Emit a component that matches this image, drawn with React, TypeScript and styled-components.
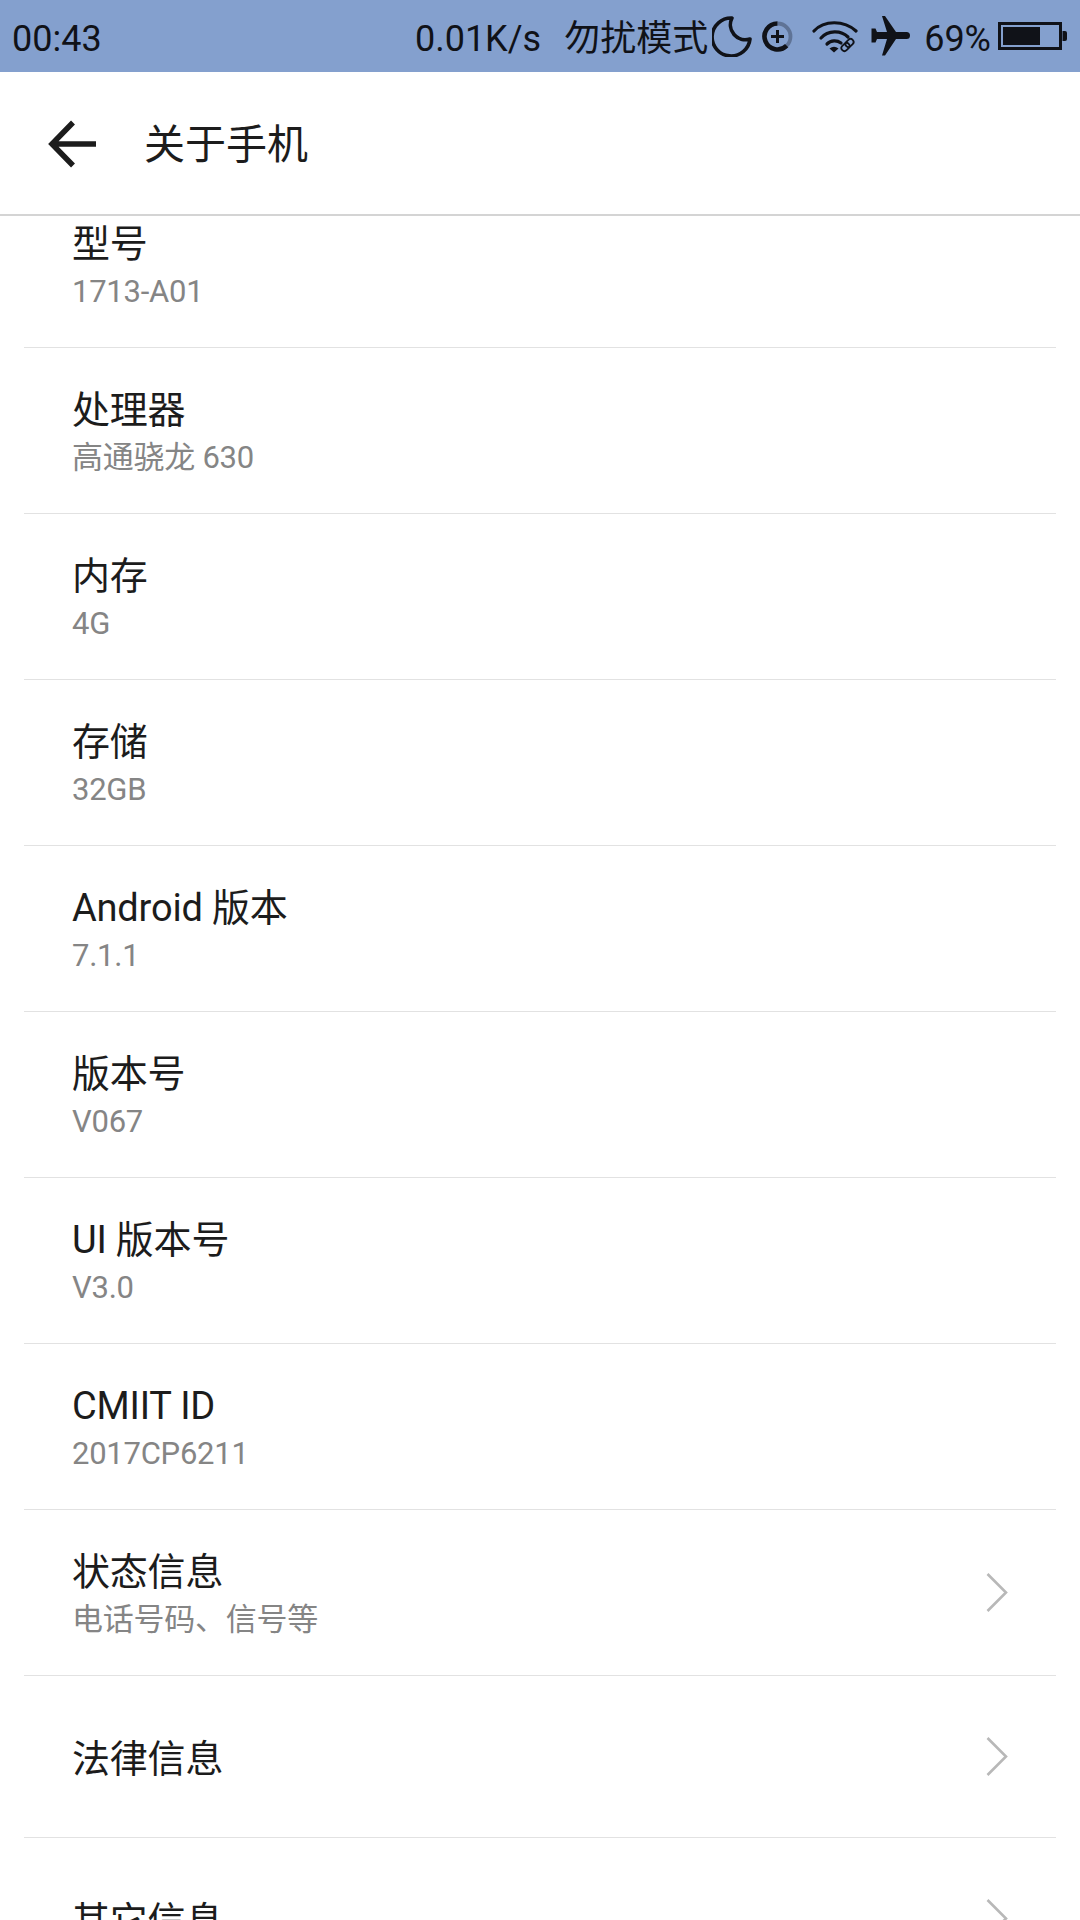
import React from "react";
import styled, { createGlobalStyle } from "styled-components";

const GlobalStyle = createGlobalStyle`
    html, body {
        margin: 0;
        padding: 0;
        background: #fff;
    }
    body {
        font-family: Roboto, "Noto Sans CJK SC", sans-serif;
    }
`;

const Page = styled.div`
    width: 1080px;
    height: 1920px;
    display: flex;
    flex-direction: column;
    overflow: hidden;
    background: #fff;
`;

const StatusBar = styled.div`
    height: 72px;
    flex: none;
    display: flex;
    align-items: center;
    justify-content: space-between;
    padding: 0 13px 0 12px;
    background: #84a0ce;
    color: #101218;
`;

const StatusText = styled.span`
    font-size: 36px;
    line-height: 65px;
    padding-top: 7px;
    white-space: nowrap;
`;

const StatusRight = styled.div`
    display: flex;
    align-items: center;
`;

const StatusIcon = styled.svg<{ $left: number }>`
    display: block;
    flex: none;
    margin-left: ${(p) => p.$left}px;
`;

const DndText = styled(StatusText)`
    margin-left: 23px;
`;

const BatteryText = styled(StatusText)`
    margin-left: 14px;
`;

const AppBar = styled.div`
    height: 142px;
    flex: none;
    display: flex;
    align-items: center;
    border-bottom: 2px solid #d4d4d4;
    color: #1c1c1c;
`;

const BackButton = styled.svg`
    display: block;
    margin-left: 48px;
    margin-right: 48px;
    padding-top: 2px;
`;

const Title = styled.div`
    font-size: 41px;
    line-height: 48px;
    padding-top: 4px;
`;

const List = styled.div`
    flex: 1;
    overflow: hidden;
`;

const Rows = styled.div`
    margin-top: -34px;
`;

const Row = styled.div<{ $height?: number }>`
    height: ${(p) => p.$height || 165}px;
    margin: 0 24px;
    padding: 0 48px 0 48px;
    display: flex;
    align-items: center;
    justify-content: space-between;
    border-bottom: 1px solid #e2e2e2;
`;

const RowText = styled.div`
    display: flex;
    flex-direction: column;
    padding-top: 5px;
`;

const RowTitle = styled.div`
    font-size: 38px;
    line-height: 48px;
    letter-spacing: -0.2px;
    color: #1c1c1c;
`;

const RowSub = styled.div`
    margin-top: 2px;
    font-size: 31px;
    line-height: 44px;
    letter-spacing: -0.25px;
    color: #858585;
`;

const Chevron = styled.svg`
    display: block;
    flex: none;
`;

interface InfoRow {
    title: string;
    sub?: string;
    link?: boolean;
    height?: number;
}

const rows: InfoRow[] = [
    { title: "型号", sub: "1713-A01" },
    { title: "处理器", sub: "高通骁龙 630" },
    { title: "内存", sub: "4G" },
    { title: "存储", sub: "32GB" },
    { title: "Android 版本", sub: "7.1.1" },
    { title: "版本号", sub: "V067" },
    { title: "UI 版本号", sub: "V3.0" },
    { title: "CMIIT ID", sub: "2017CP6211" },
    { title: "状态信息", sub: "电话号码、信号等", link: true },
    { title: "法律信息", link: true, height: 161 },
    { title: "其它信息", link: true, height: 161 },
];

export default function App() {
    return (
        <Page>
            <GlobalStyle />
            <StatusBar>
                <StatusText>00:43</StatusText>
                <StatusRight>
                    <StatusText>0.01K/s</StatusText>
                    <DndText>勿扰模式</DndText>
                    <StatusIcon $left={4} width="40" height="42" viewBox="0 0 40 42">
                        <path d="M20 3 A19 19 0 1 0 38 24 A15 15 0 0 1 20 3 Z" fill="none" stroke="#101218" strokeWidth="3.6" strokeLinejoin="round" />
                    </StatusIcon>
                    <StatusIcon $left={10} width="31" height="31" viewBox="0 0 31 31">
                        <path d="M15.5 2.5 A13 13 0 0 1 28.5 15.5 A13 13 0 0 1 24.7 24.7" fill="none" stroke="#5f7396" strokeWidth="3.8" />
                        <path d="M24.7 24.7 A13 13 0 1 1 15.5 2.5" fill="none" stroke="#101218" strokeWidth="4.6" />
                        <path d="M15.5 9 V22 M9 15.5 H22" stroke="#101218" strokeWidth="3" />
                    </StatusIcon>
                    <StatusIcon $left={19} width="46" height="34" viewBox="0 0 46 34">
                        <path d="M2 12 C12 1 32 1 44 12" fill="none" stroke="#101218" strokeWidth="3.2" strokeLinecap="round" />
                        <path d="M9 19 C16 11 29 11 36 18" fill="none" stroke="#101218" strokeWidth="3.2" strokeLinecap="round" />
                        <path d="M15 25 C19 21 25 21 29 24" fill="none" stroke="#101218" strokeWidth="3.2" strokeLinecap="round" />
                        <path d="M17.5 29.5 Q22 26 26.5 29.5 L22 33.5 Z" fill="#101218" />
                        <g fill="none" stroke="#101218" strokeWidth="1.8">
                            <rect x="33" y="21" width="9" height="6" rx="3" transform="rotate(-45 37.5 24)" />
                            <rect x="29" y="25" width="9" height="6" rx="3" transform="rotate(-45 33.5 28)" />
                        </g>
                    </StatusIcon>
                    <StatusIcon $left={13} width="39" height="40" viewBox="0 0 39 40">
                        <path d="M11 0 H14 L25 16 H35.5 Q39 16 39 19.5 Q39 23 35.5 23 H25 L14 39.5 H11 L16 23 H6 L4.5 26.5 H0.5 V12.5 H4.5 L6 16 H16 Z" fill="#101218" />
                    </StatusIcon>
                    <BatteryText>69%</BatteryText>
                    <StatusIcon $left={7} width="69" height="28" viewBox="0 0 69 28">
                        <rect x="1.5" y="1.5" width="61" height="25" fill="none" stroke="#101218" strokeWidth="3" />
                        <rect x="5" y="5" width="37" height="18" fill="#101218" />
                        <path d="M64.5 9 H67 Q69 9 69 11 V17 Q69 19 67 19 H64.5 Z" fill="#101218" />
                    </StatusIcon>
                </StatusRight>
            </StatusBar>
            <AppBar>
                <BackButton width="48" height="50" viewBox="0 0 48 48">
                    <path d="M48 24 H4 M25 2.5 L4 24 L25 45.5" fill="none" stroke="#1c1c1c" strokeWidth="5.5" />
                </BackButton>
                <Title>关于手机</Title>
            </AppBar>
            <List>
                <Rows>
                    {rows.map((row) => (
                        <Row key={row.title} $height={row.height}>
                            <RowText>
                                <RowTitle>{row.title}</RowTitle>
                                {row.sub && <RowSub>{row.sub}</RowSub>}
                            </RowText>
                            {row.link && (
                                <Chevron width="22" height="39" viewBox="0 0 22 39">
                                    <path d="M1.5 1 L20 19.5 L1.5 38" fill="none" stroke="#b8b8b8" strokeWidth="2.6" />
                                </Chevron>
                            )}
                        </Row>
                    ))}
                </Rows>
            </List>
        </Page>
    );
}
